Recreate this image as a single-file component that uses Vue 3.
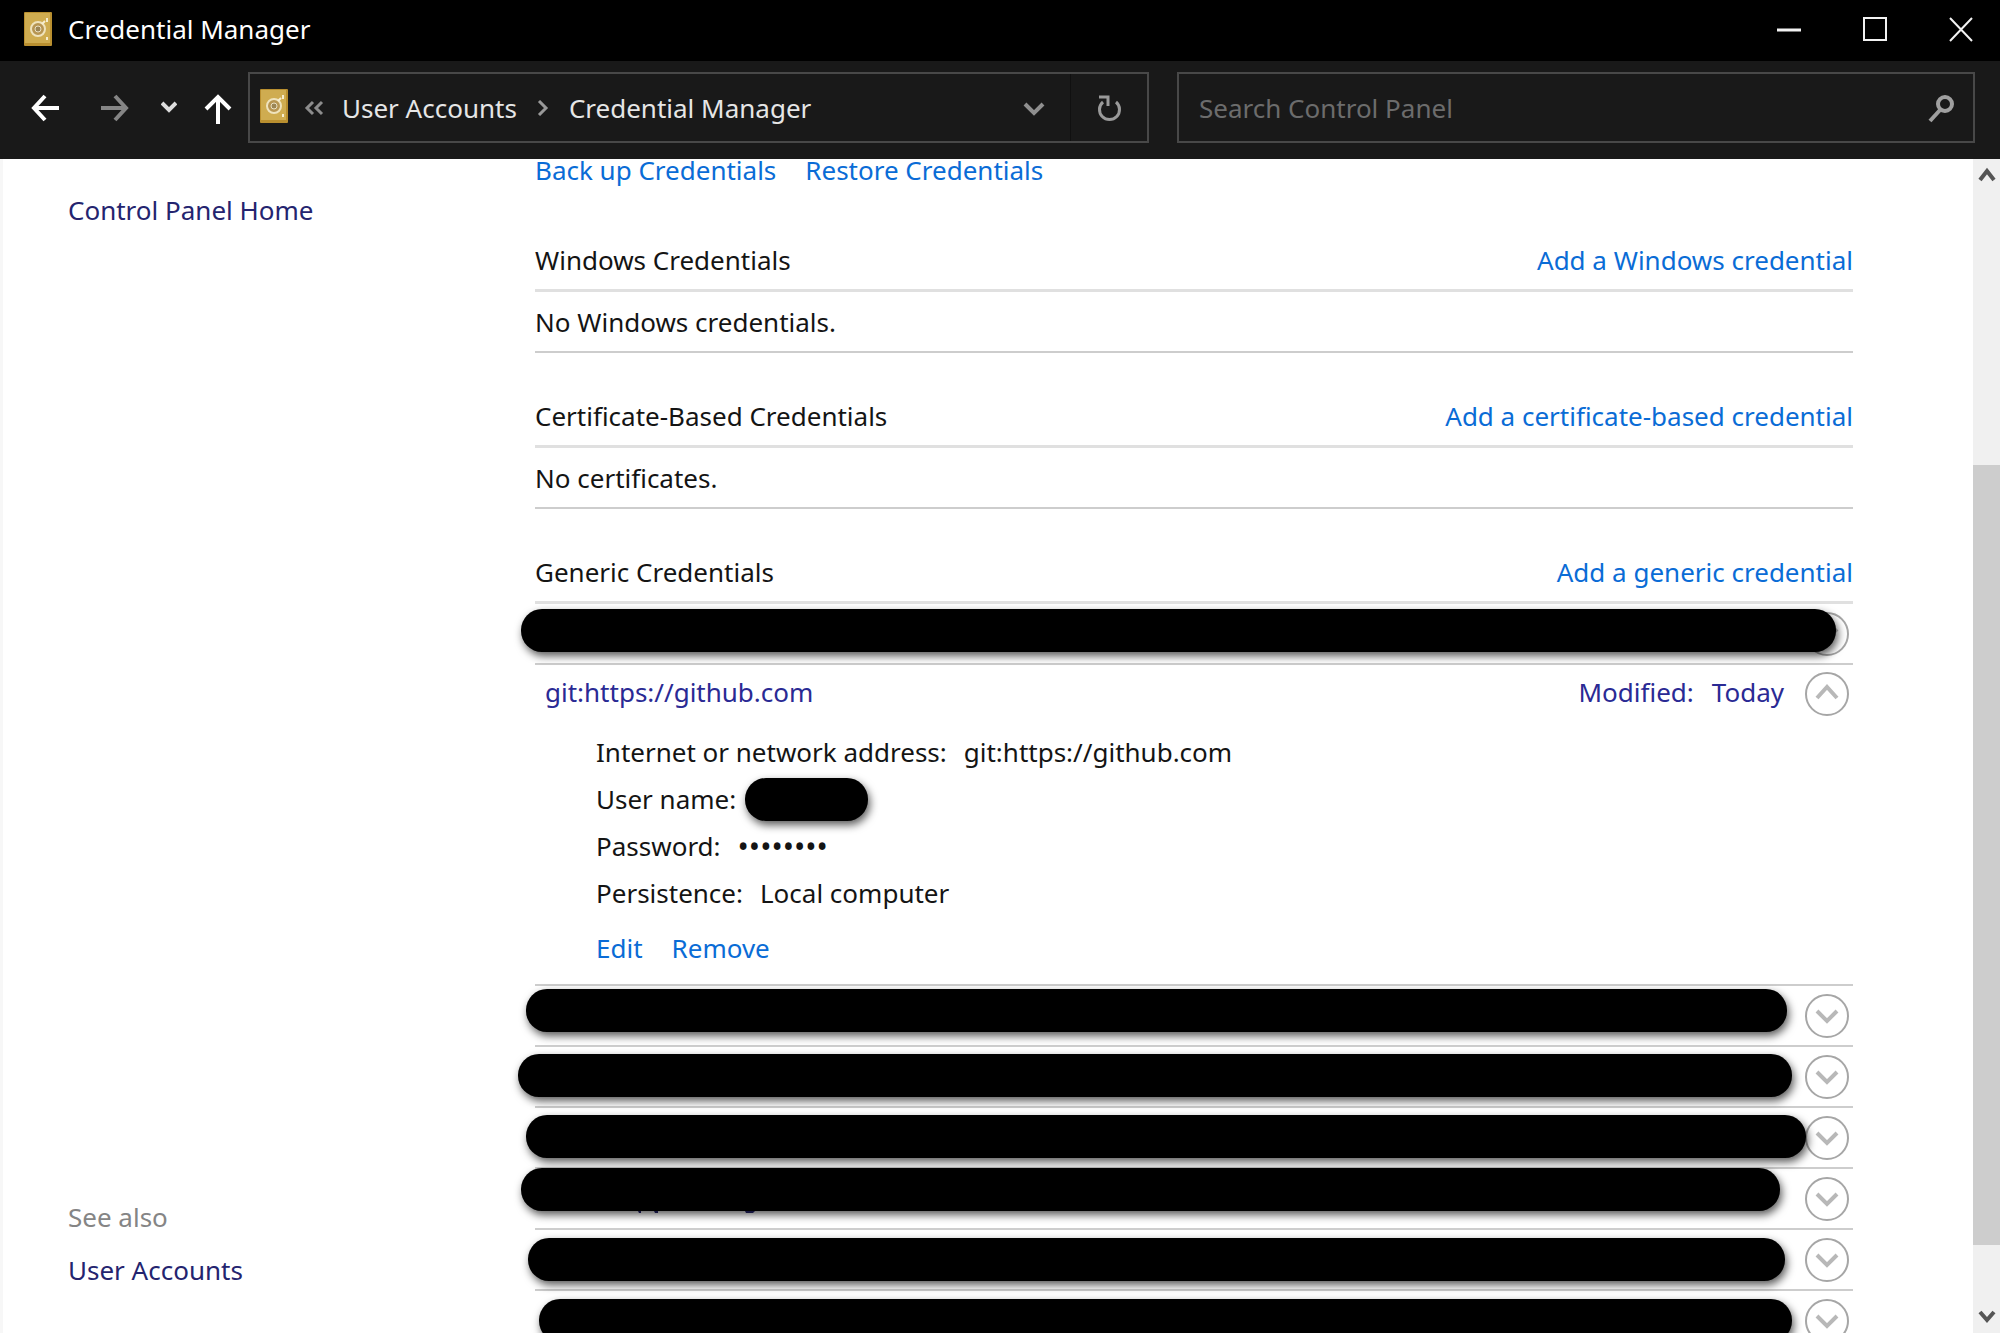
<script setup>
import { ref } from 'vue'

const search = ref('')

const emptySections = [
  { title: 'Windows Credentials', action: 'Add a Windows credential', empty: 'No Windows credentials.' },
  { title: 'Certificate-Based Credentials', action: 'Add a certificate-based credential', empty: 'No certificates.' },
]

// Offsets of each redaction mark from the edges of its row
const firstMark = { left: -14, right: 17, top: 5 }
const otherMarks = [
  { left: -9, right: 66, top: 3 },
  { left: -17, right: 61, top: 7 },
  { left: -9, right: 47, top: 7 },
  { left: -14, right: 73, top: -1, residue: true },
  { left: -7, right: 68, top: 8 },
  { left: 4, right: 61, top: 8 },
]

const px = (m) => ({ left: m.left + 'px', right: m.right + 'px', top: m.top + 'px' })
</script>

<template>
  <div class="window">
    <header class="titlebar">
      <svg class="safe" viewBox="0 0 28 34" aria-hidden="true">
        <rect width="28" height="34" rx="1" fill="#b98f2f" />
        <rect x="1" y="1" width="25" height="30" fill="#cfac50" />
        <circle cx="14" cy="17" r="7" fill="#b79552" stroke="#efe3bd" stroke-width="2" />
        <circle cx="14" cy="17" r="3" fill="#9b8555" stroke="#e9dfc2" stroke-width="1" />
        <path d="M23 6v4M21 9l-3 3M23 25v3" stroke="#f6edcf" stroke-width="2" />
      </svg>
      <h1>Credential Manager</h1>
      <div class="controls">
        <button aria-label="Minimize"><svg viewBox="0 0 24 26"><path d="M0 14h24" stroke-width="3" /></svg></button>
        <button aria-label="Maximize"><svg viewBox="0 0 24 26"><path d="M1 2h22v22H1z" stroke-width="2" /></svg></button>
        <button aria-label="Close"><svg viewBox="0 0 24 26"><path d="M1 2l22 23M23 2L1 25" stroke-width="2" /></svg></button>
      </div>
    </header>

    <nav class="toolbar">
      <div class="history">
        <button aria-label="Back"><svg width="30" height="32" viewBox="0 0 30 32" stroke="#fff" stroke-width="4"><path d="M29 16H4M15 4L4 16l11 12" /></svg></button>
        <button class="forward" aria-label="Forward"><svg width="30" height="32" viewBox="0 0 30 32" stroke="#858585" stroke-width="4"><path d="M1 16h25M15 4l11 12-11 12" /></svg></button>
        <button class="recent" aria-label="Recent locations"><svg width="16" height="16" viewBox="0 0 16 16" stroke="#ddd" stroke-width="4"><path d="M1 3l7 7 7-7" /></svg></button>
        <button class="up" aria-label="Up"><svg width="28" height="32" viewBox="0 0 28 32" stroke="#fff" stroke-width="4"><path d="M14 32V6M2 17L14 5l12 12" /></svg></button>
      </div>
      <div class="address">
        <svg class="safe" viewBox="0 0 28 34" aria-hidden="true">
          <rect width="28" height="34" rx="1" fill="#b98f2f" />
          <rect x="1" y="1" width="25" height="30" fill="#cfac50" />
          <circle cx="14" cy="17" r="7" fill="#b79552" stroke="#efe3bd" stroke-width="2" />
          <circle cx="14" cy="17" r="3" fill="#9b8555" stroke="#e9dfc2" stroke-width="1" />
          <path d="M23 6v4M21 9l-3 3M23 25v3" stroke="#f6edcf" stroke-width="2" />
        </svg>
        <svg class="more" width="20" height="16" viewBox="0 0 20 16" stroke="#8c8c8c" stroke-width="3"><path d="M9 2L3 8l6 6M18 2l-6 6 6 6" /></svg>
        <a href="#">User Accounts</a>
        <svg class="crumb" width="12" height="16" viewBox="0 0 12 16" stroke="#999" stroke-width="3"><path d="M2 1l7 7-7 7" /></svg>
        <a href="#">Credential Manager</a>
        <button class="drop" aria-label="Previous locations"><svg width="22" height="16" viewBox="0 0 22 16" stroke="#8f8f8f" stroke-width="4"><path d="M2 4l9 9 9-9" /></svg></button>
        <button class="refresh" aria-label="Refresh"><svg width="26" height="28" viewBox="0 0 26 28" stroke="#9a9a9a" stroke-width="3"><path d="M20 8a10 10 0 1 1-13 0M3 3h9v9" /></svg></button>
      </div>
      <div class="search">
        <input v-model="search" type="text" placeholder="Search Control Panel" aria-label="Search Control Panel" />
        <button aria-label="Search"><svg width="28" height="30" viewBox="0 0 28 30" stroke="#a0a0a0" stroke-width="4"><circle cx="18" cy="11" r="7" /><path d="M13 17L3 28" /></svg></button>
      </div>
    </nav>

    <div class="body">
      <aside class="sidebar">
        <a href="#">Control Panel Home</a>
        <div class="see-also">
          <span>See also</span>
          <a href="#">User Accounts</a>
        </div>
      </aside>

      <main class="content">
        <div class="links">
          <a href="#">Back up Credentials</a>
          <a href="#">Restore Credentials</a>
        </div>

        <section v-for="s in emptySections" :key="s.title">
          <div class="heading">
            <h2>{{ s.title }}</h2>
            <a href="#">{{ s.action }}</a>
          </div>
          <p class="row">{{ s.empty }}</p>
        </section>

        <section>
          <div class="heading">
            <h2>Generic Credentials</h2>
            <a href="#">Add a generic credential</a>
          </div>
          <div class="row">
            <button class="toggle" aria-label="Expand"><svg viewBox="0 0 46 46"><circle cx="23" cy="23" r="21" /><path d="M13 18l10 10 10-10" /></svg></button>
            <span class="mark" :style="px(firstMark)"></span>
          </div>

          <article class="open">
            <div class="summary">
              <span class="name">git:https://github.com</span>
              <span class="modified"><span>Modified:</span><span>Today</span></span>
              <button class="toggle" aria-label="Collapse"><svg viewBox="0 0 46 46"><circle cx="23" cy="23" r="21" /><path d="M13 27l10-11 10 11" /></svg></button>
            </div>
            <dl>
              <div><dt>Internet or network address:</dt><dd>git:https://github.com</dd></div>
              <div class="user"><dt>User name:</dt><dd class="blot"></dd></div>
              <div><dt>Password:</dt><dd class="dots">••••••••</dd></div>
              <div><dt>Persistence:</dt><dd>Local computer</dd></div>
            </dl>
            <div class="links actions">
              <a href="#">Edit</a>
              <a href="#">Remove</a>
            </div>
          </article>

          <div v-for="(m, i) in otherMarks" :key="i" class="row">
            <button class="toggle" aria-label="Expand"><svg viewBox="0 0 46 46"><circle cx="23" cy="23" r="21" /><path d="M13 18l10 10 10-10" /></svg></button>
            <span class="mark" :style="px(m)">
              <svg v-if="m.residue" class="residue" width="120" height="3" viewBox="0 0 120 3"><path d="M0 0h3v2H1zM16 0h4v2h-3zM107 0h10l-2 2h-7z" /></svg>
            </span>
          </div>
        </section>
      </main>

      <div class="scrollbar">
        <button aria-label="Scroll up"><svg width="18" height="16" viewBox="0 0 18 16"><path d="M2 13l7-9 7 9" /></svg></button>
        <div class="track"><div class="thumb"></div></div>
        <button aria-label="Scroll down"><svg width="18" height="16" viewBox="0 0 18 16"><path d="M2 3l7 8 7-8" /></svg></button>
      </div>
    </div>
  </div>
</template>

<style>
body {
  margin: 0;
  overflow: hidden;
}
</style>

<style scoped>
.window {
  display: flex;
  flex-direction: column;
  height: 100vh;
  overflow: hidden;
  background: #fff;
  color: #141414;
  font-family: "Noto Sans", "Open Sans", sans-serif;
  font-size: 26px;
  line-height: 36px;
  white-space: nowrap;
}
* {
  box-sizing: border-box;
}
h1,
h2,
p,
dl,
dd {
  margin: 0;
  font-size: inherit;
  font-weight: 400;
}
a {
  color: #0a6cd6;
  text-decoration: none;
}
button {
  display: flex;
  align-items: center;
  justify-content: center;
  padding: 0;
  border: 0;
  background: none;
}
svg {
  display: block;
  flex: none;
  fill: none;
}

.titlebar {
  display: flex;
  align-items: center;
  flex: none;
  height: 61px;
  padding: 0 27px 4px 24px;
  background: #000;
  color: #fff;
}
.safe {
  width: 28px;
  height: 34px;
}
.titlebar h1 {
  margin-left: 16px;
}
.controls {
  display: flex;
  gap: 62px;
  margin-left: auto;
}
.controls svg {
  width: 24px;
  height: 26px;
  stroke: #f2f2f2;
}

.toolbar {
  display: flex;
  align-items: center;
  flex: none;
  height: 98px;
  padding: 0 25px 5px 30px;
  background: #191919;
}
.history {
  display: flex;
  align-items: center;
  width: 218px;
}
.forward {
  margin-left: 40px;
}
.recent {
  margin-left: 31px;
}
.up {
  margin-left: 27px;
}
.address,
.search {
  display: flex;
  align-items: center;
  height: 71px;
  border: 2px solid #484848;
}
.address {
  flex: 887 1 0;
  padding-left: 10px;
}
.address a {
  color: #e6e6e6;
}
.address .safe {
  margin-bottom: 3px;
}
.more {
  margin: 0 18px 0 16px;
}
.crumb {
  margin: 0 20px;
}
.drop {
  width: 72px;
  height: 100%;
  margin-left: auto;
}
.refresh {
  width: 77px;
  height: 100%;
  border-left: 1px solid #101010;
}
.search {
  flex: 756 1 0;
  margin-left: 28px;
  padding: 0 18px 0 20px;
}
.search input {
  flex: 1;
  min-width: 0;
  padding: 0;
  border: 0;
  outline: 0;
  background: none;
  color: #e6e6e6;
  font: inherit;
}
.search input::placeholder {
  color: #6c6c6c;
  opacity: 1;
}

.body {
  display: flex;
  flex: 1;
  min-height: 0;
}
.sidebar {
  display: flex;
  flex-direction: column;
  justify-content: space-between;
  flex: none;
  width: 535px;
  padding: 33px 0 45px 65px;
  border-left: 3px solid #f7f7f7;
}
.sidebar a {
  color: #24246f;
}
.see-also {
  display: flex;
  flex-direction: column;
  gap: 17px;
  color: #858585;
}

.content {
  flex: 1;
  min-width: 0;
  margin-top: -7px;
  padding-right: 120px;
}
.links {
  display: flex;
  gap: 29px;
}
section {
  margin-top: 33px;
}
.links + section {
  margin-top: 42px;
}
.heading {
  display: flex;
  align-items: center;
  justify-content: space-between;
  height: 62px;
  border-bottom: 3px solid #e0e0e0;
}
.row {
  position: relative;
  display: flex;
  align-items: center;
  height: 61px;
  border-bottom: 2px solid #cdcdcd;
}
.toggle {
  width: 46px;
  height: 46px;
  margin: 0 3px 0 auto;
}
.toggle svg {
  width: 46px;
  height: 46px;
  stroke: #a6a6a6;
  stroke-width: 2;
}
.toggle path {
  stroke: #b8b8b8;
  stroke-width: 4;
}
.mark {
  position: absolute;
  height: 43px;
  border-radius: 21px;
  background: #000;
  box-shadow: 2px 4px 8px rgba(0, 0, 0, 0.65);
}
.residue {
  position: absolute;
  top: 100%;
  left: 117px;
  fill: #14143c;
}

.open {
  border-bottom: 2px solid #cdcdcd;
  padding-bottom: 18px;
}
.summary {
  display: flex;
  align-items: center;
  height: 58px;
  padding-left: 10px;
  color: #2a2a94;
}
.name,
.modified {
  padding-bottom: 4px;
}
.modified {
  display: flex;
  gap: 18px;
  margin-left: auto;
}
.summary .toggle {
  margin-left: 20px;
}
dl {
  padding: 6px 0 0 61px;
  line-height: 47px;
}
dl div {
  display: flex;
  align-items: center;
  gap: 17px;
  height: 47px;
}
dl .user {
  gap: 9px;
}
.blot {
  width: 123px;
  height: 43px;
  border-radius: 21px;
  background: #000;
  box-shadow: 2px 4px 8px rgba(0, 0, 0, 0.65);
}
.dots {
  font-size: 30px;
}
.actions {
  margin: 13px 0 0 61px;
}

.scrollbar {
  display: flex;
  flex-direction: column;
  flex: none;
  width: 27px;
  background: #f0f0f0;
}
.scrollbar button {
  height: 32px;
}
.scrollbar path {
  stroke: #555;
  stroke-width: 4;
}
.track {
  display: flex;
  flex-direction: column;
  justify-content: flex-end;
  flex: 1;
  padding-bottom: 56px;
}
.thumb {
  height: 74%;
  background: #cdcdcd;
}
</style>
